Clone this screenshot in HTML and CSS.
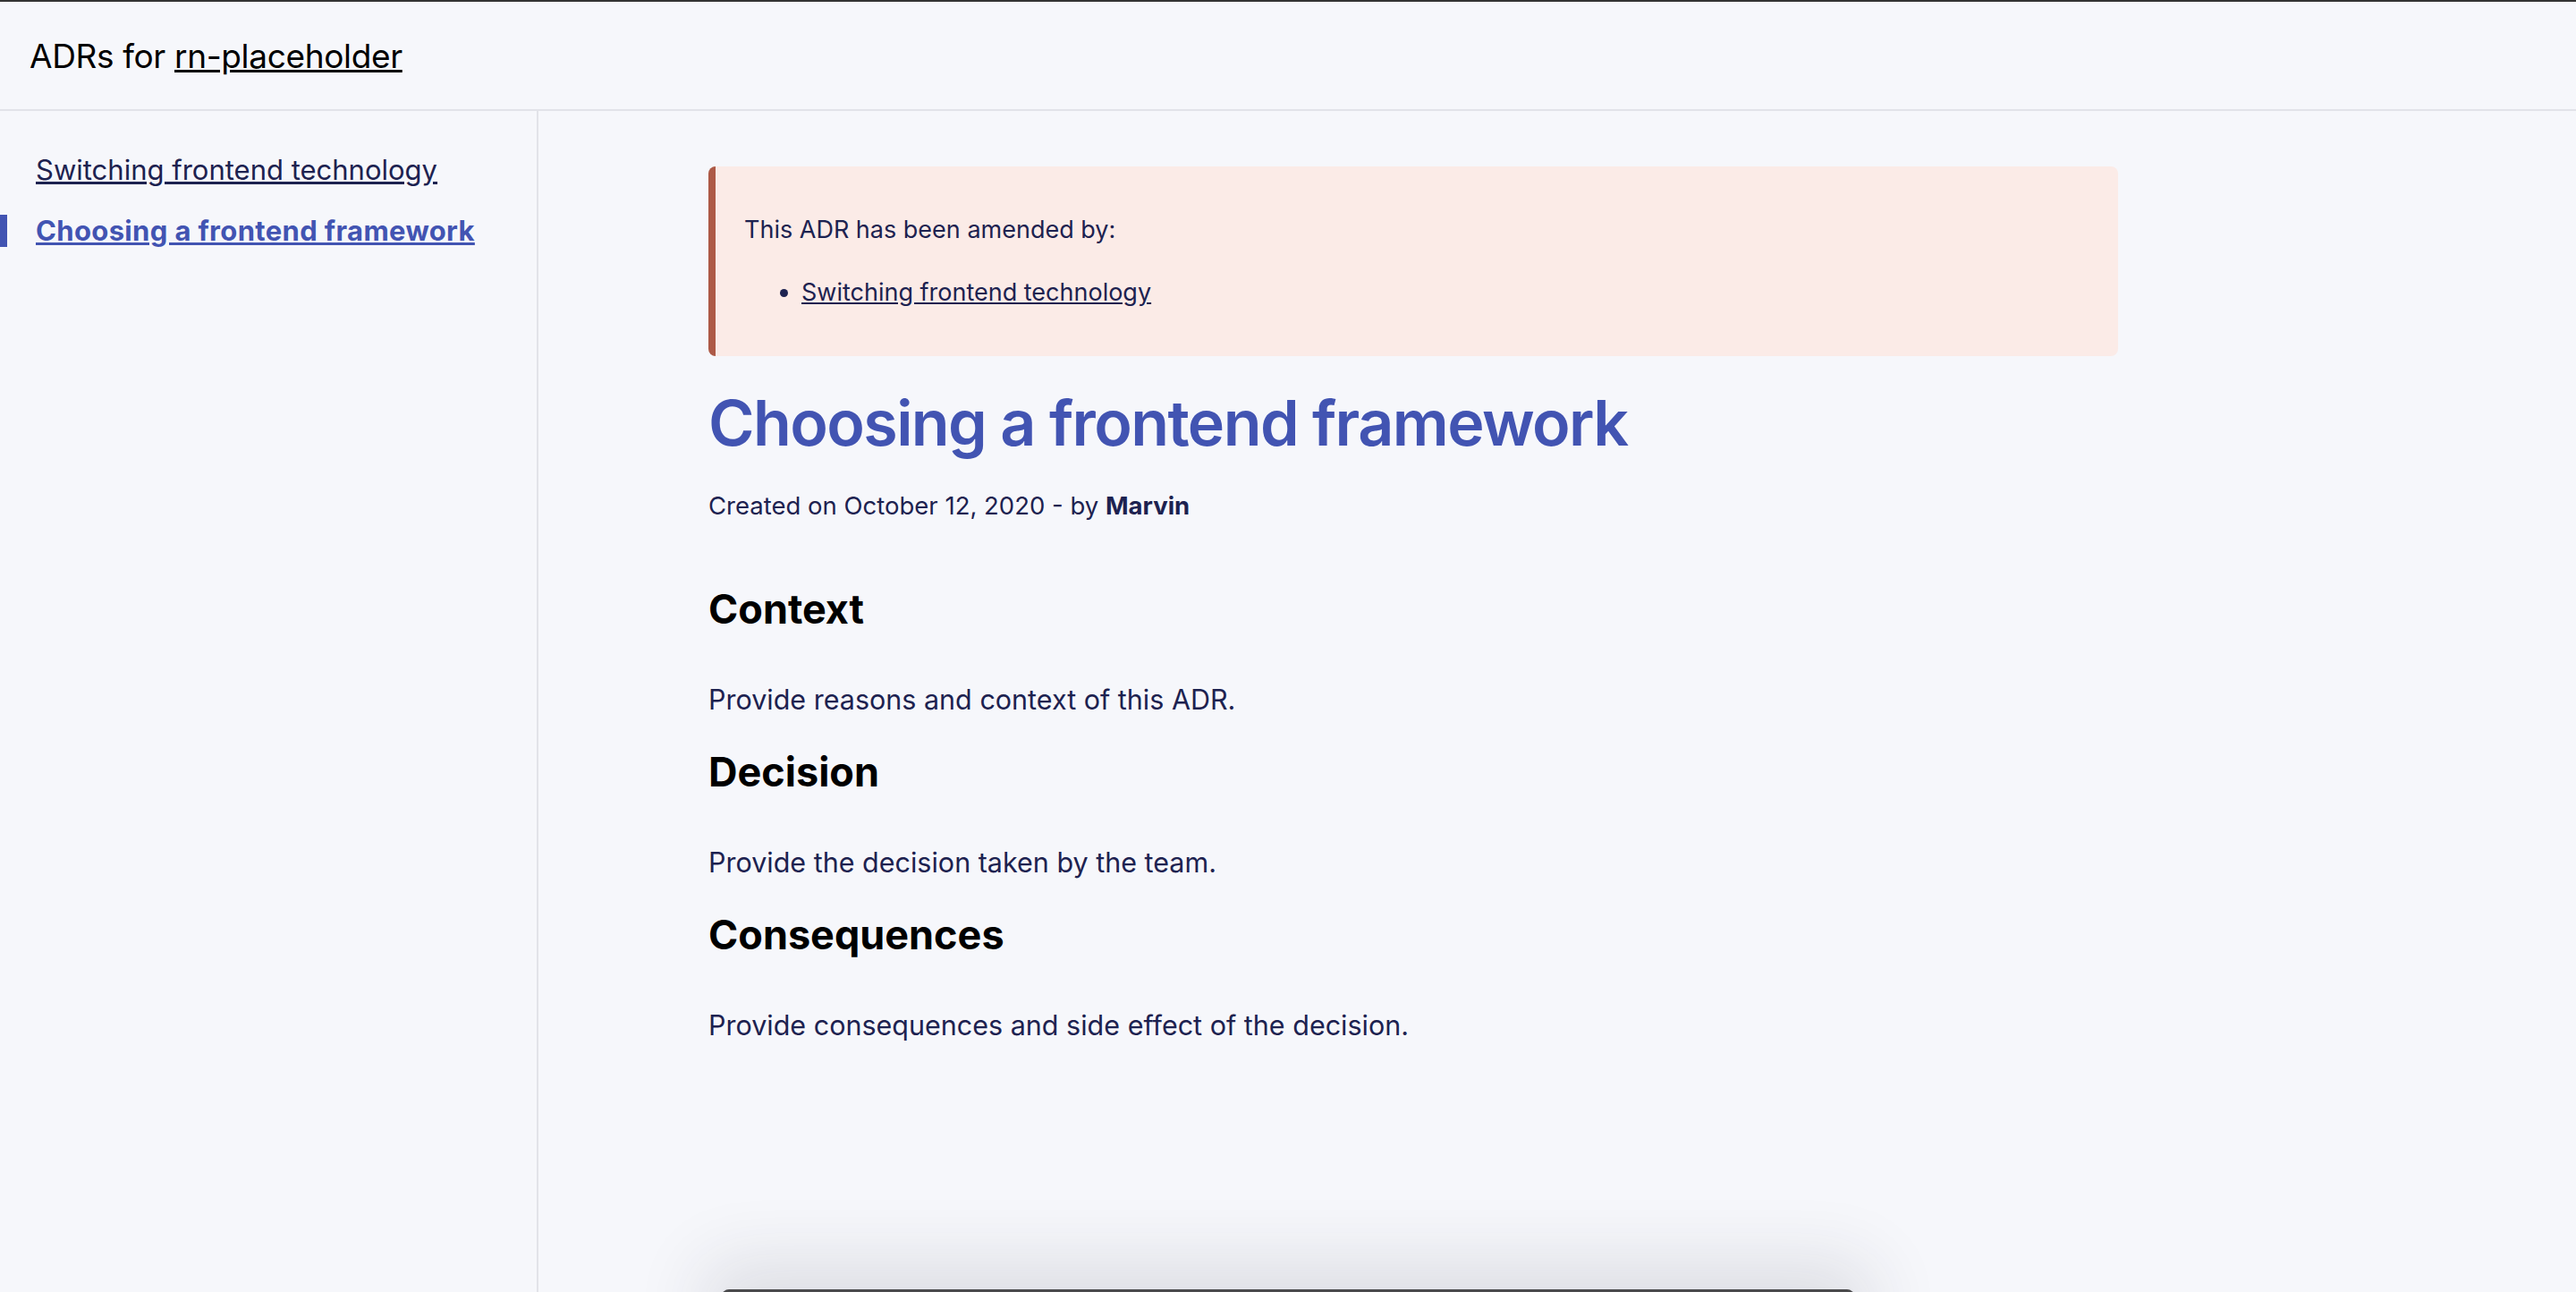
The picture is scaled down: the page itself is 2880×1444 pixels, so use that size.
FILE: index.html
```html
<!DOCTYPE html>
<html lang="en">
<head>
  <meta charset="UTF-8" />
  <meta name="viewport" content="width=device-width, initial-scale=1.0"/>
  <title>ADRs for rn-placeholder</title>
  <link rel="stylesheet" href="styles.css">
</head>
<body>
  <header class="topbar">
    <h1 class="brand">ADRs for <a href="#">rn-placeholder</a></h1>
  </header>

  <div class="layout">
    <!-- Sidebar with the list of ADRs -->
    <nav class="sidebar">
      <ul class="adr-list">
        <li><a href="#">Switching frontend technology</a></li>
        <li class="active"><a href="#">Choosing a frontend framework</a></li>
      </ul>
    </nav>

    <!-- ADR content -->
    <main class="content">
      <article class="adr">
        <div class="notice">
          <p>This ADR has been amended by:</p>
          <ul>
            <li><a href="#">Switching frontend technology</a></li>
          </ul>
        </div>

        <h1 class="adr-title">Choosing a frontend framework</h1>
        <p class="meta">Created on October 12, 2020 - by <strong>Marvin</strong></p>

        <h2>Context</h2>
        <p>Provide reasons and context of this ADR.</p>

        <h2>Decision</h2>
        <p>Provide the decision taken by the team.</p>

        <h2>Consequences</h2>
        <p>Provide consequences and side effect of the decision.</p>
      </article>
    </main>
  </div>

  <div class="dock"></div>
</body>
</html>
```

FILE: styles.css
```css
html, body {
  height: 100%;
}
body {
  margin: 0;
  font-family: Inter, "Noto Sans", sans-serif;
  background-color: #f6f7fb;
  color: #1d2250;
  border-top: 2px solid #333;
  box-sizing: border-box;
  overflow: hidden;
  display: flex;
  flex-direction: column;
}
a {
  color: inherit;
}

/* Header */
.topbar {
  height: 120px;
  display: flex;
  align-items: center;
  padding: 0 33px;
  border-bottom: 2px solid #e2e3e9;
}
.brand {
  margin: 0;
  font-size: 37px;
  font-weight: 400;
  letter-spacing: -0.35px;
  color: #000;
}
.brand a {
  color: #000;
}

/* Sidebar + content */
.layout {
  flex: 1;
  display: flex;
}
.sidebar {
  width: 600px;
  border-right: 2px solid #e2e3e9;
  padding-top: 43px;
}
.adr-list {
  list-style: none;
  margin: 0;
  padding: 0;
}
.adr-list li {
  position: relative;
  padding-left: 40px;
  font-size: 31px;
  line-height: 46px;
  margin-bottom: 22px;
}
.adr-list li.active a {
  color: #4254b2;
  font-weight: 700;
  letter-spacing: 0.35px;
}
.adr-list li.active::before {
  content: "";
  position: absolute;
  left: 0;
  top: 5px;
  width: 8px;
  height: 36px;
  background-color: #4254b2;
}

.content {
  flex: 1;
  padding: 62px 0 0 190px;
}
.adr {
  max-width: 1576px;
}

/* Amended notice */
.notice {
  background-color: #fbebe7;
  border-left: 8px solid #ad5a47;
  border-radius: 8px;
  padding: 22px 32px;
}
.notice ul {
  margin: 28px 0;
  padding-left: 64px;
  font-size: 27px;
  line-height: 42px;
}
.adr .notice p {
  font-size: 27px;
  line-height: 42px;
  margin: 28px 0;
}

.adr-title {
  font-size: 70px;
  font-weight: 600;
  letter-spacing: -1.6px;
  color: #4254b2;
  margin: 30px 0 26px;
  line-height: 90px;
}
.adr .meta {
  font-size: 27.5px;
  line-height: 42px;
  margin: 0 0 67px;
}
.meta strong {
  font-weight: 700;
}
.adr h2 {
  font-size: 45px;
  font-weight: 700;
  color: #000;
  margin: 0;
  line-height: 56px;
}
.adr p {
  font-size: 30.5px;
  line-height: 46px;
}
.adr h2 + p {
  margin: 50px 0 30px;
}

/* Floating bar peeking in from the bottom edge */
.dock {
  position: fixed;
  left: 807px;
  bottom: -60px;
  width: 1266px;
  height: 63px;
  background-color: #4a4a4c;
  border-radius: 8px;
  box-shadow: 0 -10px 80px 20px rgba(40, 40, 60, 0.12);
}
```
